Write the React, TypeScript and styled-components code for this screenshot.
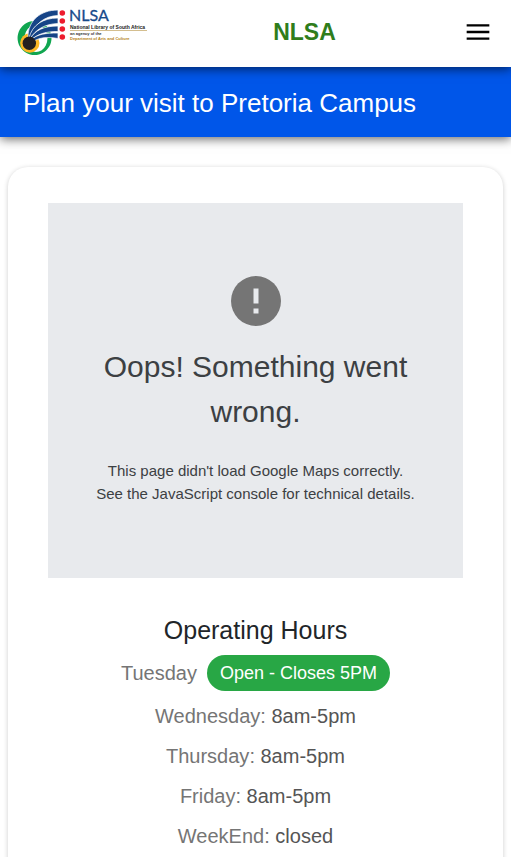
import React from "react";
import styled, { createGlobalStyle } from "styled-components";

const GlobalStyle = createGlobalStyle`
  *, *::before, *::after { box-sizing: border-box; }
  body {
    margin: 0;
    background: #fff;
    color: #212529;
    font-family: "Liberation Sans", Arial, sans-serif;
    overflow-x: hidden;
  }
  h1, h2, h3, p, ul { margin: 0; padding: 0; font-weight: 400; }
`;

const Header = styled.header`
  display: flex;
  align-items: center;
  justify-content: space-between;
  height: 67px;
  padding: 0 16px 3px;
  background: #fff;
  position: relative;
  z-index: 2;
  box-shadow: 0 2px 10px rgba(0, 0, 0, 0.6);
`;

const LogoLink = styled.a`
  display: flex;
`;

const Brand = styled.a`
  color: #2f7d1b;
  font-size: 23px;
  line-height: 28px;
  font-weight: 700;
  text-decoration: none;
`;

const MenuButton = styled.button`
  display: flex;
  padding: 0;
  border: 0;
  background: none;
  color: #000;
  cursor: pointer;
`;

const Banner = styled.section`
  display: flex;
  align-items: center;
  min-height: 70px;
  padding: 2px 23px 0;
  background: #0056e9;
  color: #fff;
  position: relative;
  z-index: 1;
  box-shadow: 0 2px 10px rgba(0, 0, 0, 0.6);
`;

const BannerTitle = styled.h1`
  font-size: 26px;
  line-height: 32px;
`;

const Card = styled.main`
  display: flex;
  flex-direction: column;
  align-items: stretch;
  margin: 30px 8px 0;
  padding: 36px 40px 40px;
  border-radius: 20px;
  background: #fff;
  box-shadow: 0 1px 5px rgba(0, 0, 0, 0.2);
`;

const MapError = styled.section`
  display: flex;
  flex-direction: column;
  align-items: center;
  min-height: 375px;
  padding: 73px 40px 0;
  background: #e8eaed;
  color: #3c4043;
  text-align: center;
`;

const ErrorTitle = styled.h2`
  margin-top: 18px;
  font-size: 30px;
  line-height: 45px;
`;

const ErrorText = styled.p`
  margin-top: 25px;
  font-size: 15px;
  line-height: 23px;
`;

const Hours = styled.section`
  display: flex;
  flex-direction: column;
  align-items: center;
  margin-top: 36px;
`;

const HoursTitle = styled.h3`
  font-size: 25px;
  line-height: 32px;
`;

const Today = styled.div`
  display: flex;
  align-items: center;
  gap: 10px;
  margin-top: 9px;
  margin-bottom: 5px;
  color: #757575;
  font-size: 20px;
`;

const Status = styled.span`
  padding: 0 13px;
  border-radius: 18px;
  background: #28a745;
  color: #fff;
  font-size: 18px;
  line-height: 36px;
`;

const DayList = styled.ul`
  list-style: none;
  text-align: center;
`;

const Day = styled.li`
  color: #757575;
  font-size: 20px;
  line-height: 40px;
`;

const Time = styled.span`
  color: #555;
`;

const dots = [13, 21, 29, 37];

const Logo = () => (
  <svg width="132" height="60" viewBox="16 2 132 60" role="img" aria-label="National Library of South Africa">
    <path
      fill="#10a650"
      fillRule="evenodd"
      d="M34.500 21a17 17 0 1 0 .1 0ZM36 25a11.500 13.500 0 1 1-.1 0Z"
    />
    <circle cx="29.800" cy="43" r="9.700" fill="#fbb725" />
    <g fill="#164487" stroke="#fff" strokeWidth=".7">
      <path d="M28 37c0-16 12-27 30-27v5.500C44 16 35 24 29 38Z" />
      <path d="M29 38c3-13 14-20 29-20v5.500C45 24 36 29 30 39Z" />
      <path d="M30 39c5-9 14-13 28-13v5.500c-12 0-20 2-27 9Z" />
      <path d="M31 40c6-6 15-7 27-7v5.500c-11-2-20-1-26 4Z" />
    </g>
    <circle cx="29.300" cy="43.300" r="6.700" fill="#231f20" />
    {dots.map((y) => (
      <circle key={y} cx="62.300" cy={y} r="2.800" fill="#ed1c2e" />
    ))}
    <g fontFamily="Liberation Sans, Arial, sans-serif">
      <text x="69" y="21" fontFamily="Lato, sans-serif" fontSize="16" fill="#174a8b" stroke="#174a8b" strokeWidth=".3">
        NLSA
      </text>
      <text x="70" y="29" fontSize="5" fontWeight="700" fill="#222">
        National Library of South Africa
      </text>
      <path d="M70 30.500h77" stroke="#c9ad72" strokeWidth=".8" />
      <text x="70" y="35" fontSize="4" fontWeight="700" fill="#333">
        an agency of the
      </text>
      <text x="70" y="40" fontSize="4" fontWeight="700" fill="#b58116">
        Department of Arts and Culture
      </text>
    </g>
  </svg>
);

const MenuIcon = () => (
  <svg width="34" height="34" viewBox="0 0 24 24" fill="currentColor" aria-hidden="true">
    <path d="M4 17.500h16v-1.700H4v1.700Zm0-4.650h16v-1.700H4v1.700Zm0-6.350v1.700h16V6.500H4Z" />
  </svg>
);

const ErrorIcon = () => (
  <svg width="50" height="50" viewBox="0 0 50 50" aria-hidden="true">
    <circle cx="25" cy="25" r="25" fill="#757575" />
    <path fill="#e8eaed" d="M22.500 12.500h5v15h-5zM22.500 32.500h5v5h-5z" />
  </svg>
);

const days = [
  { name: "Wednesday", time: "8am-5pm" },
  { name: "Thursday", time: "8am-5pm" },
  { name: "Friday", time: "8am-5pm" },
  { name: "WeekEnd", time: "closed" },
];

export default function App() {
  return (
    <>
      <GlobalStyle />
      <Header>
        <LogoLink href="#">
          <Logo />
        </LogoLink>
        <Brand href="#">NLSA</Brand>
        <MenuButton type="button" aria-label="Open menu">
          <MenuIcon />
        </MenuButton>
      </Header>
      <Banner>
        <BannerTitle>Plan your visit to Pretoria Campus</BannerTitle>
      </Banner>
      <Card>
        <MapError>
          <ErrorIcon />
          <ErrorTitle>Oops! Something went wrong.</ErrorTitle>
          <ErrorText>
            This page didn't load Google Maps correctly.
            <br />
            See the JavaScript console for technical details.
          </ErrorText>
        </MapError>
        <Hours>
          <HoursTitle>Operating Hours</HoursTitle>
          <Today>
            Tuesday
            <Status>Open - Closes 5PM</Status>
          </Today>
          <DayList>
            {days.map((day) => (
              <Day key={day.name}>
                {day.name}: <Time>{day.time}</Time>
              </Day>
            ))}
          </DayList>
        </Hours>
      </Card>
    </>
  );
}
